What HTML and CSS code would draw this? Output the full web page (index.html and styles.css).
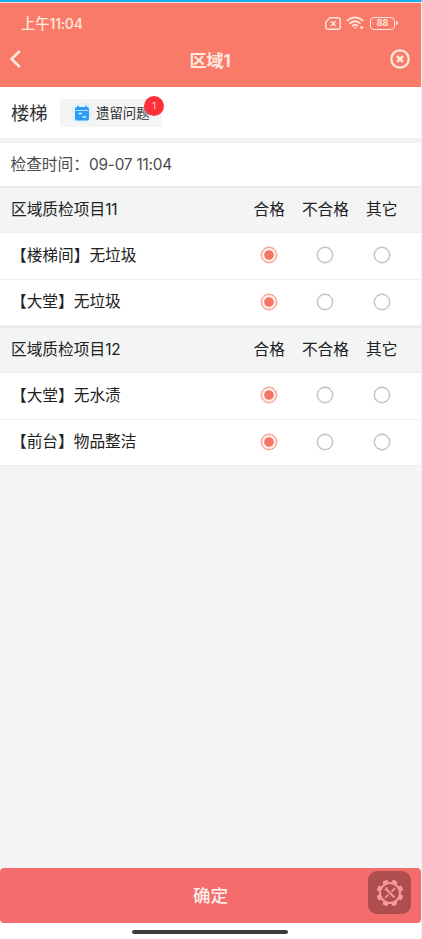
FILE: index.html
```html
<!DOCTYPE html>
<html lang="zh-CN">
<head>
<meta charset="utf-8">
<title>区域1</title>
<link rel="stylesheet" href="styles.css">
</head>
<body>
<div class="screen">
  <header class="header">
    <div class="status">
      <span class="clock">上午<span class="num">11:04</span></span>
      <div class="status-icons">
        <svg class="sim" width="16" height="13" viewBox="0 0 16 13" fill="none" stroke="currentColor" stroke-width="1.4"><path d="M5 .8h8.2a2 2 0 0 1 2 2v7.400a2 2 0 0 1-2 2H2.800a2 2 0 0 1-2-2V5z"/><path d="M6 4.300l4.600 4.600M10.600 4.300L6 8.900"/></svg>
        <svg class="wifi" width="19" height="14" viewBox="0 0 19 14" fill="none" stroke="currentColor" stroke-width="1.8"><path d="M.8 4.900Q9 -2.200 17.200 4.900M3.500 7.600Q9 2.800 14.500 7.600M6 10.100Q9 7.600 12 10.100"/><path d="M7.400 11.300h3.200L9 13z" fill="currentColor" stroke="none"/><circle cx="15.700" cy="11.500" r="1.500" fill="currentColor" stroke="none"/></svg>
        <span class="battery">88</span>
      </div>
    </div>
    <div class="nav">
      <svg width="12" height="18" viewBox="0 0 12 18" fill="none" stroke="currentColor" stroke-width="2.600"><path d="M10.800 1L2.500 9l8.300 8"/></svg>
      <h1 class="title">区域<span class="num">1</span></h1>
      <svg width="20" height="20" viewBox="0 0 20 20" fill="none" stroke="currentColor"><circle cx="10" cy="10" r="8.700" stroke-width="2.200"/><path d="M7 7l6 6M13 7l-6 6" stroke-width="2.500"/></svg>
    </div>
  </header>

  <section class="place">
    <span class="place-name">楼梯</span>
    <button class="issues">
      <svg width="20" height="20" viewBox="0 0 20 20"><rect x="3" y="4" width="14" height="13.500" rx="2" fill="#2c9cf5"/><path d="M6 2.800v2.500M14 2.800v2.500" stroke="#2c9cf5" stroke-width="1.600"/><path d="M3.500 7.500h13" stroke="#b9e2ff" stroke-width="1.100"/><path d="M6.500 10.500h3.500M10.500 14h3.500" stroke="#e4f4ff" stroke-width="1.400"/></svg>
      <span class="issues-label">遗留问题</span>
      <span class="badge">1</span>
    </button>
  </section>

  <section class="time">检查时间：<span class="num">09-07 11:04</span></section>

  <main>
    <section class="group">
      <div class="line head"><span>区域质检项目<span class="num">11</span></span><span class="opt">合格</span><span class="opt">不合格</span><span class="opt">其它</span></div>
      <div class="line item"><span>【楼梯间】无垃圾</span><i class="radio on"></i><i class="radio"></i><i class="radio"></i></div>
      <div class="line item"><span>【大堂】无垃圾</span><i class="radio on"></i><i class="radio"></i><i class="radio"></i></div>
    </section>
    <section class="group">
      <div class="line head"><span>区域质检项目<span class="num">12</span></span><span class="opt">合格</span><span class="opt">不合格</span><span class="opt">其它</span></div>
      <div class="line item"><span>【大堂】无水渍</span><i class="radio on"></i><i class="radio"></i><i class="radio"></i></div>
      <div class="line item"><span>【前台】物品整洁</span><i class="radio on"></i><i class="radio"></i><i class="radio"></i></div>
    </section>
  </main>

  <footer class="footer">
    <button class="confirm">确定</button>
    <div class="debug">
      <svg width="28" height="28" viewBox="-14 -14 28 28" fill="none" stroke="currentColor"><circle r="10" stroke-width="2"/><g fill="currentColor" stroke="none" transform="rotate(22.5)"><rect id="tooth" x="-2.700" y="-13.400" width="5.400" height="4" rx="1.200"/><use href="#tooth" transform="rotate(45)"/><use href="#tooth" transform="rotate(90)"/><use href="#tooth" transform="rotate(135)"/><use href="#tooth" transform="rotate(180)"/><use href="#tooth" transform="rotate(225)"/><use href="#tooth" transform="rotate(270)"/><use href="#tooth" transform="rotate(315)"/></g><path d="M-3.500 -3.500L4.500 4.500" stroke-width="2.200"/><path d="M-5.500 -3.500h2.300v-2.200" stroke-width="1.600"/><path d="M5.200 -5L1.500 -1.300M-1.500 1.500L-5 5" stroke-width="1.700"/></svg>
    </div>
    <div class="home"></div>
  </footer>
</div>
</body>
</html>
```

FILE: styles.css
```css
* {
  box-sizing: border-box;
}

body {
  margin: 0;
  font-family: "Noto Sans CJK SC", sans-serif;
  color: #303133;
}

button {
  border: 0;
  padding: 0;
  font: inherit;
  color: inherit;
}

svg {
  display: block;
}

.num {
  font-family: Inter, sans-serif;
  font-size: 0.98em;
  line-height: 1;
  letter-spacing: -0.2px;
}

.screen {
  display: flex;
  flex-direction: column;
  height: 939px;
  background: #f4f4f4;
  border-top: 2px solid #14aff0;
  border-right: 1px solid #f0f0f0;
}

.header {
  height: 85px;
  border-top: 1px solid #f8d9d5;
  background: #fa7a69;
  color: #ffe9df;
}

.status {
  display: flex;
  justify-content: space-between;
  align-items: center;
  height: 40px;
  padding: 0 24px 0 21px;
}

.clock {
  padding-bottom: 1px;
  font-size: 14.3px;
  font-weight: 500;
}

.status-icons {
  display: flex;
  align-items: center;
  gap: 5px;
}

.battery {
  position: relative;
  width: 25px;
  height: 13px;
  margin-right: 2px;
  border: 1.5px solid currentColor;
  border-radius: 4px;
  font: 700 9px/10px Inter, sans-serif;
  text-align: center;
}

.battery::after {
  content: "";
  position: absolute;
  top: 3px;
  right: -3.5px;
  width: 2px;
  height: 4px;
  border-radius: 0 2px 2px 0;
  background: currentColor;
}

.nav {
  display: flex;
  justify-content: space-between;
  align-items: center;
  height: 32px;
  padding: 0 11px 0 9px;
}

.title {
  margin: 1px 0 0 9px;
  font-size: 17px;
  line-height: 24px;
  font-weight: 700;
}

.place {
  display: flex;
  align-items: center;
  height: 56px;
  padding: 0 11px;
  border-bottom: 5px solid #f2f2f2;
  background: #fff;
}

.place-name {
  width: 49px;
  padding-bottom: 2px;
  font-size: 18.3px;
}

.issues {
  position: relative;
  display: flex;
  align-items: center;
  gap: 4px;
  width: 102px;
  height: 28px;
  padding-left: 12px;
  border-radius: 2px;
  background: #f4f4f4;
  font-size: 13.4px;
  font-weight: 400;
}

.issues-label {
  padding-bottom: 2px;
}

.issues svg {
  border-radius: 6px;
  background: #e0f3fd;
}

.badge {
  position: absolute;
  top: -3px;
  right: -2px;
  width: 20px;
  height: 20px;
  border-radius: 50%;
  background: #fb3038;
  color: #ffd9d9;
  font-family: Inter, sans-serif;
  font-size: 9px;
  line-height: 19px;
  text-align: center;
}

.time {
  height: 43px;
  padding-left: 10.5px;
  background: #fff;
  color: #4c4c4c;
  font-size: 15.7px;
  line-height: 42px;
}

main {
  flex: 1;
}

.line {
  display: grid;
  grid-template-columns: 230px repeat(3, 56.3px);
  align-items: center;
  padding-left: 11px;
  font-size: 15.7px;
  font-weight: 400;
  color: #222;
  white-space: nowrap;
}

.head {
  height: 47px;
  padding-bottom: 3px;
  border-top: 2px solid #ebebeb;
  border-bottom: 1px solid #ededed;
  background: #f3f4f4;
}

.opt {
  text-align: center;
}

.item {
  height: 46.5px;
  padding-bottom: 3px;
  border-bottom: 1px solid #efefef;
  background: #fff;
}

.item .radio {
  margin-top: 2px;
}

.radio {
  justify-self: center;
  width: 16px;
  height: 16px;
  border: 1.5px solid #b9b9b9;
  border-radius: 50%;
  box-shadow: 0 0 0 0.4px #b9b9b9;
}

.radio.on {
  border: 1px solid #f49a8e;
  box-shadow: 0 0 0 0.4px #f49a8e;
  background: radial-gradient(circle, #f57565 4.3px, #fff0ed 5.2px);
}

.footer {
  position: relative;
  height: 71px;
  background: #fff;
}

.confirm {
  display: block;
  width: 100%;
  height: 55px;
  padding-bottom: 2px;
  border-radius: 4px;
  background: #f56c6c;
  color: #fff0eb;
  font-size: 17.5px;
  font-weight: 500;
}

.debug {
  position: absolute;
  top: 3px;
  right: 10px;
  display: grid;
  place-items: center;
  width: 43px;
  height: 43px;
  border-radius: 9px;
  background: #af4e4f;
  color: #f59a98;
}

.home {
  width: 156px;
  height: 4px;
  margin: 7px 0 0 132px;
  border-radius: 2px;
  background: #3b3d3c;
}
```
